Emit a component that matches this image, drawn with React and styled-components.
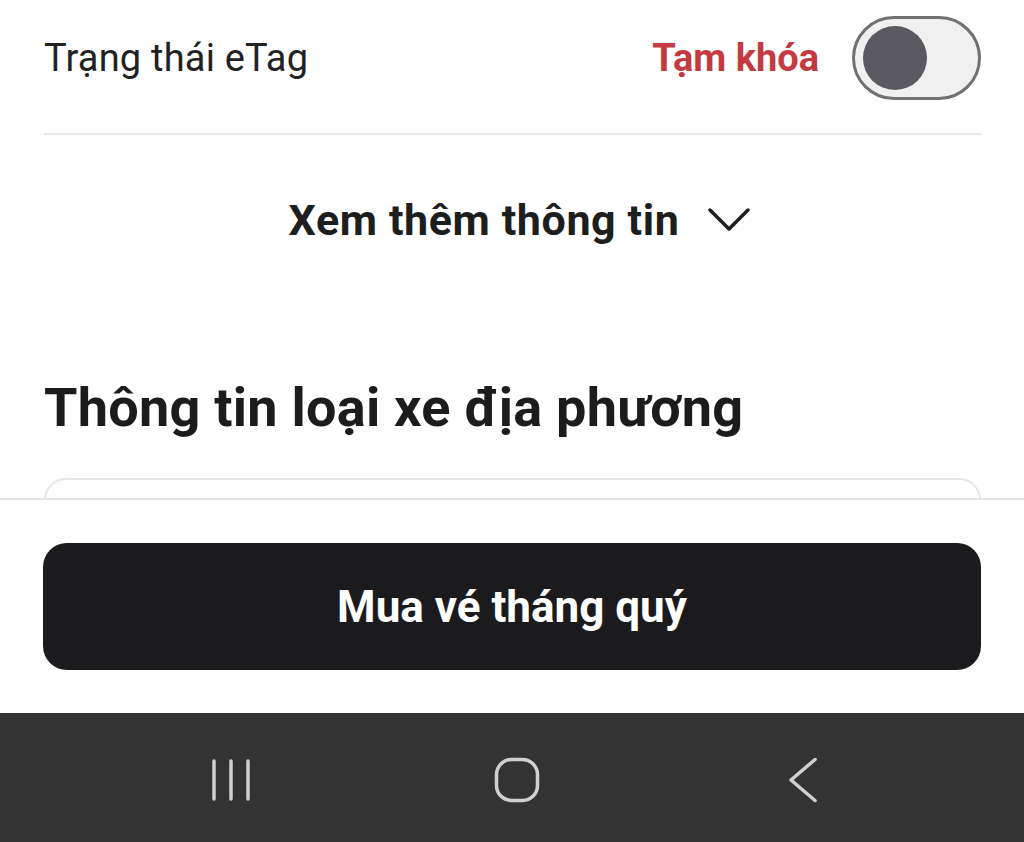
import React from "react";
import styled, { createGlobalStyle } from "styled-components";

const GlobalStyle = createGlobalStyle`
  html, body {
    margin: 0;
    padding: 0;
    background: #ffffff;
    font-family: Roboto, "Noto Sans", sans-serif;
  }
`;

const Page = styled.div`
  width: 1024px;
  height: 842px;
  display: flex;
  flex-direction: column;
  overflow: hidden;
`;

const Main = styled.div`
  flex: 1;
  overflow: hidden;
  padding: 0 43px 0 44px;
`;

const StatusRow = styled.div`
  display: flex;
  align-items: center;
  padding: 16px 0 33px;
`;

const Label = styled.span`
  flex: 1;
  font-size: 38px;
  color: #222222;
  letter-spacing: 0.2px;
`;

const StatusText = styled.span`
  font-size: 38px;
  font-weight: 700;
  color: #c53a40;
  margin-right: 33px;
`;

const Toggle = styled.div`
  width: 129px;
  height: 84px;
  box-sizing: border-box;
  border: 3px solid #707070;
  border-radius: 42px;
  background: #f0f0f0;
  display: flex;
  align-items: center;
  padding-left: 8px;
`;

const Knob = styled.div`
  width: 64px;
  height: 64px;
  border-radius: 50%;
  background: #5a5960;
`;

const Divider = styled.div`
  height: 2px;
  background: #e6e6e6;
`;

const MoreRow = styled.div`
  height: 170px;
  display: flex;
  align-items: center;
  justify-content: center;
  gap: 29px;
  font-size: 43px;
  font-weight: 700;
  letter-spacing: 0.6px;
  color: #1e1e1e;
  padding-left: 14px;
`;

const Heading = styled.h2`
  margin: 72px 0 0;
  font-size: 54px;
  line-height: 62px;
  font-weight: 700;
  letter-spacing: 0.25px;
  color: #1c1c1c;
`;

const Card = styled.div`
  margin-top: 39px;
  height: 120px;
  border: 2px solid #e6e6e6;
  border-radius: 22px;
`;

const BottomBar = styled.div`
  border-top: 2px solid #e6e6e6;
  padding: 43px 43px;
  background: #ffffff;
`;

const BuyButton = styled.button`
  width: 100%;
  height: 127px;
  border: none;
  border-radius: 24px;
  background: #1b1b1d;
  color: #ffffff;
  font-family: Roboto, "Noto Sans", sans-serif;
  font-size: 44px;
  font-weight: 700;
  cursor: pointer;
`;

const NavBar = styled.div`
  height: 129px;
  flex-shrink: 0;
  background: #333333;
  display: flex;
  align-items: center;
  gap: 186px;
  padding: 4px 0 0 181px;
  box-sizing: border-box;
`;

const NavItem = styled.div`
  width: 100px;
  display: flex;
  justify-content: center;
`;

const Chevron = () => (
  <svg width="42" height="26" viewBox="0 0 42 26">
    <path d="M2 3 L21 22 L40 3" fill="none" stroke="#1e1e1e" strokeWidth="3.5" strokeLinecap="round" strokeLinejoin="round" />
  </svg>
);

const RecentsIcon = () => (
  <svg width="40" height="44" viewBox="0 0 40 44">
    <g stroke="#d0d0d0" strokeWidth="3.5" strokeLinecap="round">
      <line x1="3" y1="3" x2="3" y2="41" />
      <line x1="20" y1="3" x2="20" y2="41" />
      <line x1="37" y1="3" x2="37" y2="41" />
    </g>
  </svg>
);

const HomeIcon = () => (
  <svg width="46" height="46" viewBox="0 0 46 46">
    <rect x="2.5" y="2.5" width="41" height="41" rx="15" fill="none" stroke="#d0d0d0" strokeWidth="3.5" />
  </svg>
);

const BackIcon = () => (
  <svg width="32" height="46" viewBox="0 0 32 46">
    <path d="M28 2.5 L4 23 L28 43.5" fill="none" stroke="#d0d0d0" strokeWidth="3.5" strokeLinecap="round" strokeLinejoin="round" />
  </svg>
);

export default function App() {
  return (
    <Page>
      <GlobalStyle />
      <Main>
        <StatusRow>
          <Label>Trạng thái eTag</Label>
          <StatusText>Tạm khóa</StatusText>
          <Toggle>
            <Knob />
          </Toggle>
        </StatusRow>
        <Divider />
        <MoreRow>
          <span>Xem thêm thông tin</span>
          <Chevron />
        </MoreRow>
        <Heading>Thông tin loại xe địa phương</Heading>
        <Card />
      </Main>
      <BottomBar>
        <BuyButton>Mua vé tháng quý</BuyButton>
      </BottomBar>
      <NavBar>
        <NavItem><RecentsIcon /></NavItem>
        <NavItem><HomeIcon /></NavItem>
        <NavItem><BackIcon /></NavItem>
      </NavBar>
    </Page>
  );
}
